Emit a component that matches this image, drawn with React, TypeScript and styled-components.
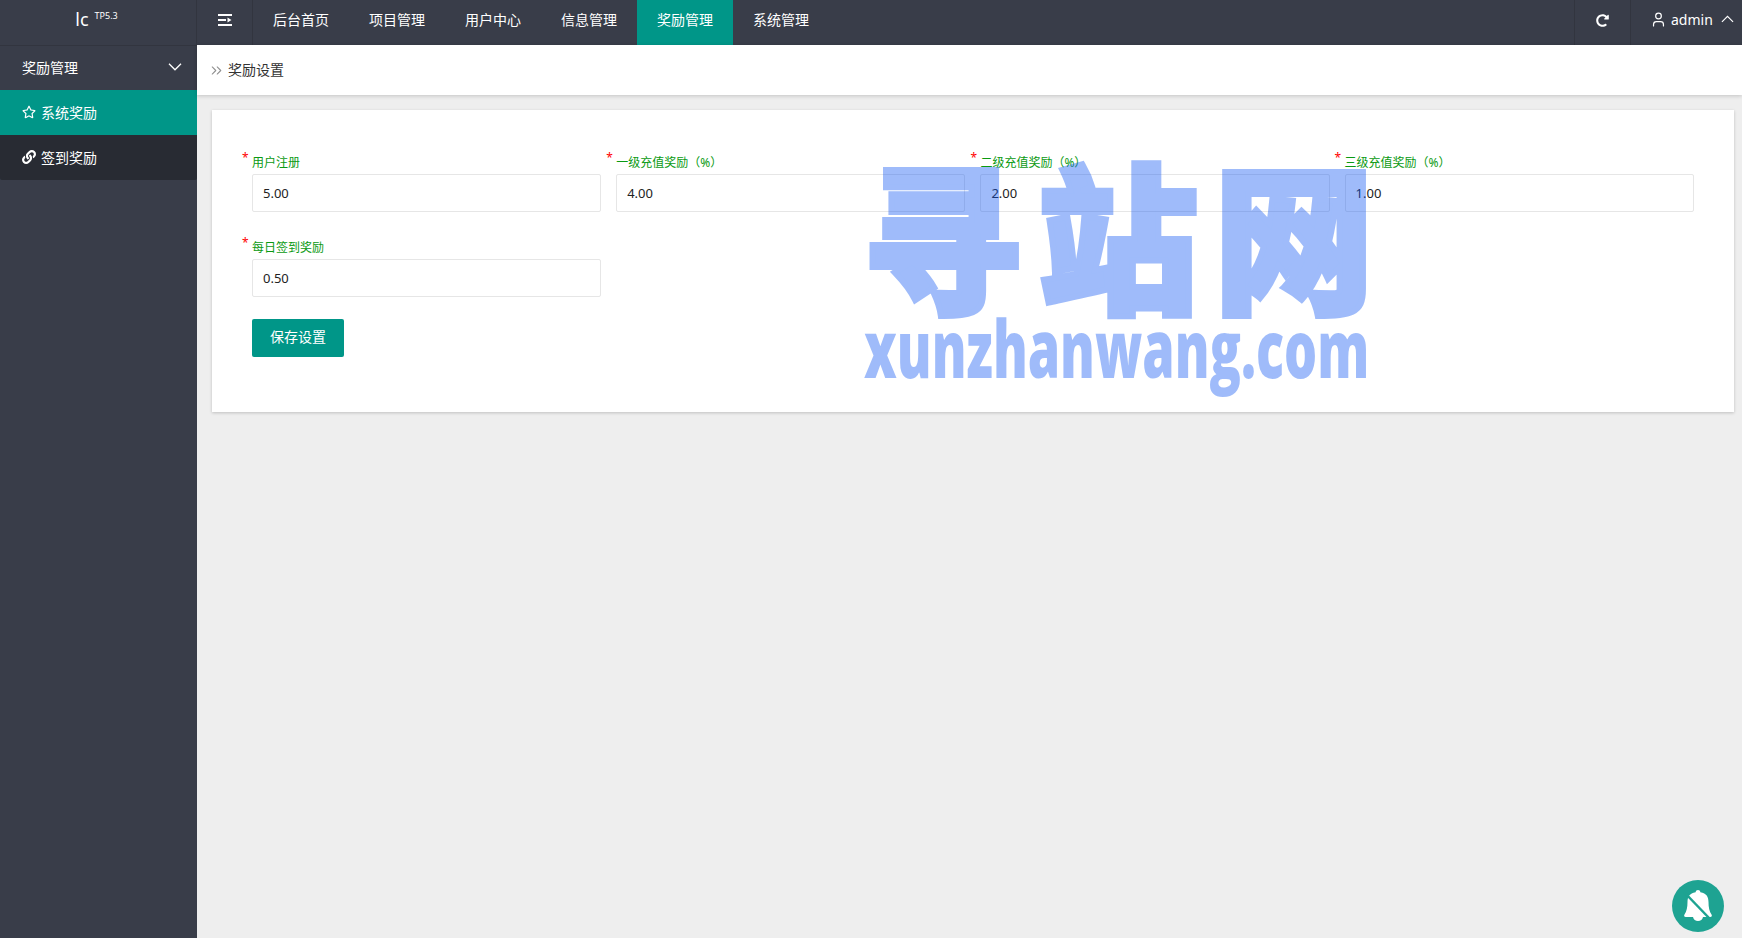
import React from "react";
import styled, { createGlobalStyle } from "styled-components";
import { FaLink, FaRegStar, FaRedoAlt } from "react-icons/fa";
import { ChevronsRight, User } from "lucide-react";

const FONT = `"Noto Sans", "Noto Sans CJK SC", sans-serif`;

const NAV_ITEMS = ["后台首页", "项目管理", "用户中心", "信息管理", "奖励管理", "系统管理"];

const FIELDS = [
  { label: "用户注册", value: "5.00" },
  { label: "一级充值奖励（%）", value: "4.00" },
  { label: "二级充值奖励（%）", value: "2.00" },
  { label: "三级充值奖励（%）", value: "1.00" },
  { label: "每日签到奖励", value: "0.50" },
];

const Chevron = ({ width, up }: { width: number; up?: boolean }) => (
  <svg width={width} height={width * 0.58} viewBox="0 0 14 8" fill="none" stroke="#fff" strokeWidth="1.3">
    <path d={up ? "M1 7.300l6-6 6 6" : "M1 .7l6 6 6-6"} />
  </svg>
);

export default function App() {
  return (
    <Page>
      <GlobalStyle />
      <Header>
        <Logo>
          lc<LogoVersion>TP5.3</LogoVersion>
        </Logo>
        <MenuToggle>
          <svg width="14" height="12" viewBox="0 0 14 12" fill="#fff">
            <rect x="0" y="0" width="14" height="2" />
            <rect x="0" y="5" width="8" height="2" />
            <rect x="0" y="10" width="14" height="2" />
            <path d="M9.500 3.500v5L13.500 6z" />
          </svg>
        </MenuToggle>
        {NAV_ITEMS.map((item) => (
          <NavItem key={item} $active={item === "奖励管理"}>
            {item}
          </NavItem>
        ))}
        <HeaderRight>
          <RefreshCell>
            <FaRedoAlt size={13} />
          </RefreshCell>
          <UserCell>
            <User size={17} strokeWidth={1.7} />
            <UserName>admin</UserName>
            <Chevron width={13} up />
          </UserCell>
        </HeaderRight>
      </Header>
      <Body>
        <Sidebar>
          <SideGroup>
            奖励管理
            <Chevron width={14} />
          </SideGroup>
          <SideItem $active>
            <FaRegStar size={14} />
            系统奖励
          </SideItem>
          <SideItem>
            <FaLink size={14} />
            签到奖励
          </SideItem>
        </Sidebar>
        <Main>
          <Breadcrumb>
            <CrumbIcon size={17} color="#8f8f8f" strokeWidth={1.5} />
            奖励设置
          </Breadcrumb>
          <Card>
            <FormGrid>
              {FIELDS.map((field) => (
                <Field key={field.label}>
                  <FieldLabel>
                    <Required>*</Required>
                    {field.label}
                  </FieldLabel>
                  <FieldInput defaultValue={field.value} />
                </Field>
              ))}
            </FormGrid>
            <SaveButton>保存设置</SaveButton>
          </Card>
        </Main>
      </Body>
      <Watermark>
        <WatermarkCn>寻站网</WatermarkCn>
        <WatermarkEn>xunzhanwang.com</WatermarkEn>
      </Watermark>
      <BellButton>
        <svg width="34" height="34" viewBox="0 0 34 34">
          <path
            fill="#fff"
            d="M17 1c1.300 0 2.200.9 2.400 2.200C25.500 4 27.500 8 27.500 13c0 5 .8 9.500 3 12.500.8 1 .2 2.500-1.200 2.500H22c-.5 2.800-2.500 4-5 4s-4.500-1.200-5-4H4.700c-1.400 0-2-1.500-1.200-2.500 2.200-3 3-7.500 3-12.500 0-5 2-9 8.100-9.800C14.800 1.900 15.700 1 17 1z"
          />
          <path d="M3 3l26 27" stroke="#1ea392" strokeWidth="2.5" fill="none" />
        </svg>
      </BellButton>
    </Page>
  );
}

const GlobalStyle = createGlobalStyle`
  html, body {
    margin: 0;
    padding: 0;
    height: 100%;
    background: #eeeeee;
    overflow: hidden;
  }
  * {
    box-sizing: border-box;
  }
`;

const Page = styled.div`
  position: relative;
  display: flex;
  flex-direction: column;
  height: 938px;
  font-family: ${FONT};
  font-size: 14px;
`;

const Header = styled.header`
  display: flex;
  align-items: stretch;
  height: 45px;
  flex-shrink: 0;
  background: #393d49;
  color: #fff;
`;

const Logo = styled.div`
  display: flex;
  justify-content: center;
  align-items: flex-start;
  width: 197px;
  padding: 7px 3px 0 0;
  border-right: 1px solid #32353f;
  font-size: 18px;
  line-height: 24px;
`;

const LogoVersion = styled.sup`
  margin: 0 0 0 6px;
  font-size: 9px;
  line-height: 18px;
`;

const MenuToggle = styled.div`
  display: flex;
  align-items: center;
  justify-content: center;
  width: 56px;
  padding-bottom: 5px;
  border-right: 1px solid #32353f;
`;

const NavItem = styled.div<{ $active?: boolean }>`
  display: flex;
  align-items: center;
  justify-content: center;
  width: 96px;
  padding-bottom: 8px;
  background: ${(p) => (p.$active ? "#009688" : "transparent")};
`;

const HeaderRight = styled.div`
  display: flex;
  margin-left: auto;
`;

const RefreshCell = styled.div`
  display: flex;
  align-items: center;
  justify-content: center;
  width: 57px;
  padding-bottom: 5px;
  border-left: 1px solid #32353f;
  border-right: 1px solid #32353f;
`;

const UserCell = styled.div`
  display: flex;
  align-items: center;
  width: 111px;
  padding: 0 0 7px 19px;
`;

const UserName = styled.span`
  margin: 0 8px 0 4px;
  font-size: 14px;
`;

const Body = styled.div`
  display: flex;
  flex: 1;
  min-height: 0;
`;

const Sidebar = styled.aside`
  width: 197px;
  flex-shrink: 0;
  background: #393d49;
  color: #fff;
`;

const SideGroup = styled.div`
  display: flex;
  align-items: center;
  justify-content: space-between;
  height: 45px;
  padding: 0 15px 2px 22px;
  border-top: 1px solid #32353f;
`;

const SideItem = styled.div<{ $active?: boolean }>`
  display: flex;
  align-items: center;
  gap: 5px;
  height: 45px;
  padding: 0 0 2px 22px;
  background: ${(p) => (p.$active ? "#009688" : "#282b33")};
  border-radius: ${(p) => (p.$active ? "0" : "0 0 2px 2px")};
`;

const Main = styled.main`
  display: flex;
  flex-direction: column;
  flex: 1;
  min-width: 0;
  background: #eeeeee;
`;

const Breadcrumb = styled.div`
  display: flex;
  align-items: center;
  gap: 3px;
  height: 50px;
  padding: 0 0 3px 11px;
  background: #fff;
  color: #333;
  box-shadow: 0 1px 4px rgba(0, 0, 0, 0.18);
`;

const CrumbIcon = styled(ChevronsRight)`
  margin-top: 3px;
`;

const Card = styled.section`
  margin: 15px 8px 0 15px;
  padding: 40px 40px 55px;
  background: #fff;
  box-shadow: 0 1px 3px rgba(0, 0, 0, 0.2);
`;

const FormGrid = styled.div`
  display: grid;
  grid-template-columns: repeat(4, 349.2px);
  column-gap: 15px;
  row-gap: 23px;
`;

const Field = styled.div`
  display: flex;
  flex-direction: column;
`;

const FieldLabel = styled.label`
  display: flex;
  align-items: center;
  height: 24px;
  color: #0a9a12;
  font-size: 12px;
`;

const Required = styled.span`
  width: 10px;
  margin: -8px 0 0 -10px;
  color: #f00;
  font-size: 12px;
  line-height: 12px;
`;

const FieldInput = styled.input`
  width: 100%;
  height: 38px;
  padding: 0 10px;
  border: 1px solid #e6e6e6;
  border-radius: 2px;
  outline: none;
  background: #fff;
  color: #222;
  font-family: ${FONT};
  font-size: 13px;
`;

const SaveButton = styled.button`
  display: block;
  width: 92px;
  height: 38px;
  margin-top: 22px;
  padding: 0 0 4px;
  border: none;
  border-radius: 2px;
  background: #009688;
  color: #fff;
  font-family: ${FONT};
  font-size: 14px;
`;

const Watermark = styled.div`
  position: absolute;
  left: 862px;
  top: 136px;
  width: 510px;
  color: #1158f3;
  opacity: 0.4;
  pointer-events: none;
`;

const WatermarkCn = styled.div`
  font-family: "Noto Sans CJK SC", sans-serif;
  font-size: 160px;
  font-weight: 900;
  line-height: 190px;
  letter-spacing: 16px;
  white-space: nowrap;
  -webkit-text-stroke: 6px #1158f3;
`;

const WatermarkEn = styled.div`
  margin-top: -25px;
  font-family: "Open Sans", sans-serif;
  font-size: 80px;
  font-weight: 800;
  line-height: 92px;
  white-space: nowrap;
  transform: scaleX(0.65);
  transform-origin: 6px 0;
`;

const BellButton = styled.div`
  position: absolute;
  right: 18px;
  bottom: 6px;
  display: flex;
  align-items: center;
  justify-content: center;
  width: 52px;
  height: 52px;
  border-radius: 50%;
  background: #1ea392;
`;
